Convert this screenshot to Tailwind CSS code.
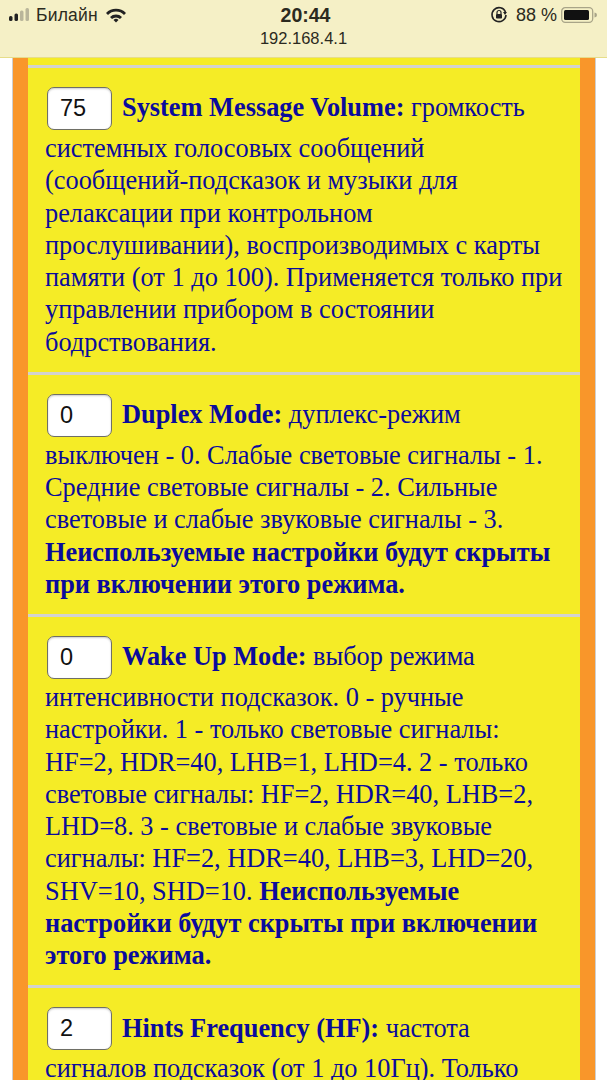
<!DOCTYPE html>
<html lang="ru">
<head>
<meta charset="utf-8">
<script src="https://cdn.jsdelivr.net/npm/@tailwindcss/browser@4"></script>
</head>
<body class="bg-white overflow-hidden">
<div class="h-[1080px] overflow-hidden flex flex-col">
  <header class="h-[58px] shrink-0 relative bg-[#f5f0c6] border-b border-[#e6dd8a] font-['Liberation_Sans',sans-serif] text-[#2b2a20]">
    <div class="absolute left-[8px] top-[5px] flex items-center h-[20px]">
      <svg width="24" height="16" viewBox="0 0 24 16" class="mr-[4px]"><rect x="1" y="9" width="3.500" height="5" rx="1.500" fill="#222"/><rect x="6.500" y="6.500" width="3.500" height="7.500" rx="1.500" fill="#222"/><rect x="12" y="3.500" width="3.500" height="10.500" rx="1.500" fill="#b9b59a"/><rect x="17.500" y="1" width="3.500" height="13" rx="1.500" fill="#b9b59a"/></svg>
      <span class="text-[17.500px] tracking-[0.2px]">Билайн</span>
      <svg width="22" height="16" viewBox="0 0 22 16" class="ml-[7px]"><path d="M1 6 A14 14 0 0 1 21 6 L19 8 A11 11 0 0 0 3 8 Z" fill="#222"/><path d="M5 10 A8.500 8.500 0 0 1 17 10 L15 12 A6 6 0 0 0 7 12 Z" fill="#222"/><path d="M8.500 13 A3.500 3.500 0 0 1 13.500 13 L11 15.500 Z" fill="#222"/></svg>
    </div>
    <div class="absolute left-[4px] right-0 top-[5px] text-center text-[19.500px] leading-[20px] font-bold">20:44</div>
    <div class="absolute left-0 right-0 top-[29px] text-center text-[16.500px] leading-[18px]">192.168.4.1</div>
    <div class="absolute right-[10px] top-[5px] flex items-center h-[20px]">
      <svg width="18" height="18" viewBox="0 0 18 18" class="mr-[8px]"><path d="M15.500 6 A7 7 0 1 0 16 9" fill="none" stroke="#222" stroke-width="1.600"/><path d="M13 6 H17 L15 9 Z" fill="#222"/><rect x="6" y="8" width="6" height="4.500" rx="0.800" fill="#222"/><path d="M7 8 V6.500 A2 2 0 0 1 11 6.500 V8" fill="none" stroke="#222" stroke-width="1.200"/></svg>
      <span class="text-[18px] mr-[4px]">88 %</span>
      <svg width="36" height="18" viewBox="0 0 36 18"><rect x="0.700" y="1.700" width="31" height="14.600" rx="3.500" fill="none" stroke="#a8a488" stroke-width="1.300"/><rect x="3" y="4" width="25" height="10" rx="1.500" fill="#111"/><path d="M33.500 6.500 A2.500 2.500 0 0 1 33.500 11.500 Z" fill="#a8a488"/></svg>
    </div>
  </header>
  <main class="flex-1 ml-[12px] mr-[11px] border-x border-[#cfcfcf] bg-[#f9962a] px-[15px] overflow-hidden font-['Liberation_Serif',serif] text-[26.350px] leading-[32.250px] text-[#0b0b9c]">
    <div class="h-[7px] bg-[#f5ec26]"></div>
    <div class="h-[3px] bg-[#d2d2d0]"></div>
    <section class="bg-[#f5ec26] pl-[17px] pr-[14px] pt-[19px] pb-[13px]">
      <div class="flex items-center h-[43px] mb-[3px]"><input value="75" class="w-[65px] h-[43px] ml-[2px] mr-[10px] px-[12px] rounded-[7px] border border-[#6f6f66] bg-white shadow-[inset_0_1px_2px_rgba(0,0,0,0.2)] text-[23.500px] text-[#111] font-['Liberation_Sans',sans-serif]"><span class="whitespace-nowrap"><b>System Message Volume:</b> громкость</span></div>
      <p>системных голосовых сообщений (сообщений-подсказок и музыки для релаксации при контрольном прослушивании), воспроизводимых с карты памяти (от 1 до 100). Применяется только при управлении прибором в состоянии бодрствования.</p>
    </section>
    <div class="h-[3px] bg-[#d2d2d0]"></div>
    <section class="bg-[#f5ec26] pl-[17px] pr-[14px] pt-[19px] pb-[13px]">
      <div class="flex items-center h-[43px] mb-[3px]"><input value="0" class="w-[65px] h-[43px] ml-[2px] mr-[10px] px-[12px] rounded-[7px] border border-[#6f6f66] bg-white shadow-[inset_0_1px_2px_rgba(0,0,0,0.2)] text-[23.500px] text-[#111] font-['Liberation_Sans',sans-serif]"><span class="whitespace-nowrap"><b>Duplex Mode:</b> дуплекс-режим</span></div>
      <p>выключен - 0. Слабые световые сигналы - 1. Средние световые сигналы - 2. Сильные световые и слабые звуковые сигналы - 3. <b>Неиспользуемые настройки будут скрыты при включении этого режима.</b></p>
    </section>
    <div class="h-[3px] bg-[#d2d2d0]"></div>
    <section class="bg-[#f5ec26] pl-[17px] pr-[14px] pt-[19px] pb-[13px]">
      <div class="flex items-center h-[43px] mb-[3px]"><input value="0" class="w-[65px] h-[43px] ml-[2px] mr-[10px] px-[12px] rounded-[7px] border border-[#6f6f66] bg-white shadow-[inset_0_1px_2px_rgba(0,0,0,0.2)] text-[23.500px] text-[#111] font-['Liberation_Sans',sans-serif]"><span class="whitespace-nowrap"><b>Wake Up Mode:</b> выбор режима</span></div>
      <p>интенсивности подсказок. 0 - ручные настройки. 1 - только световые сигналы: HF=2, HDR=40, LHB=1, LHD=4. 2 - только световые сигналы: HF=2, HDR=40, LHB=2, LHD=8. 3 - световые и слабые звуковые сигналы: HF=2, HDR=40, LHB=3, LHD=20, SHV=10, SHD=10. <b>Неиспользуемые настройки будут скрыты при включении этого режима.</b></p>
    </section>
    <div class="h-[3px] bg-[#d2d2d0]"></div>
    <section class="bg-[#f5ec26] pl-[17px] pr-[14px] pt-[19px] pb-[13px]">
      <div class="flex items-center h-[43px] mb-[3px]"><input value="2" class="w-[65px] h-[43px] ml-[2px] mr-[10px] px-[12px] rounded-[7px] border border-[#6f6f66] bg-white shadow-[inset_0_1px_2px_rgba(0,0,0,0.2)] text-[23.500px] text-[#111] font-['Liberation_Sans',sans-serif]"><span class="whitespace-nowrap"><b>Hints Frequency (HF):</b> частота</span></div>
      <p>сигналов подсказок (от 1 до 10Гц). Только при ручных настройках.</p>
    </section>
  </main>
</div>
</body>
</html>
